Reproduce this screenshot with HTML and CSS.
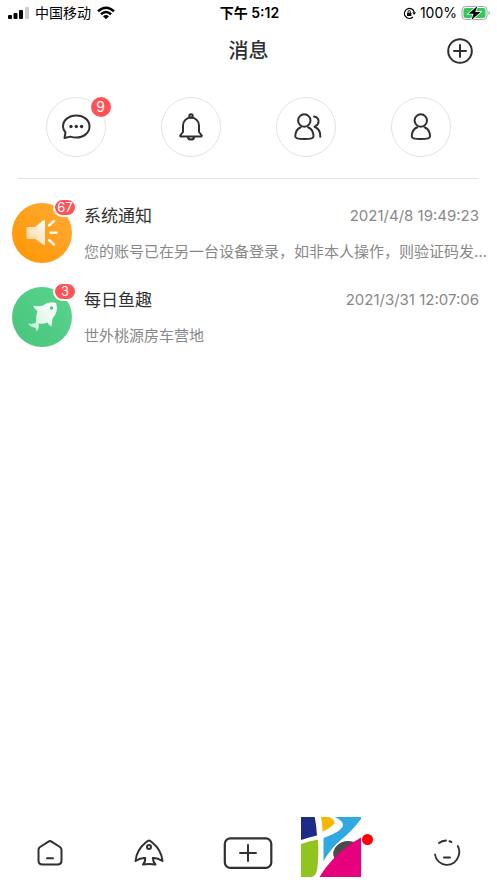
FILE: index.html
```html
<!DOCTYPE html>
<html lang="zh-CN">
<head>
<meta charset="utf-8">
<meta name="viewport" content="width=device-width, initial-scale=1">
<title>消息</title>
<link rel="stylesheet" href="styles.css">
</head>
<body>
<div class="status">
  <div class="status-side">
    <svg width="21" height="14" viewBox="0 0 21 14"><rect x="0" y="9" width="4" height="4" rx="1"/><rect x="5.500" y="7" width="4" height="6" rx="1"/><rect x="11" y="4" width="4" height="9" rx="1"/><rect x="17" y="1" width="4" height="12" rx="1" fill="#ccc"/></svg>
    <span>中国移动</span>
    <svg width="18" height="14" viewBox="0 0 18 14" fill="none" stroke="#000" stroke-width="2.500"><path d="M1 5.200Q9-1.800 17 5.200M3.900 8.200Q9 3.800 14.100 8.200"/><path d="M6 10.300Q9 7.900 12 10.300L9 13.300Z" fill="#000" stroke="none"/></svg>
  </div>
  <span class="clock">下午 5:12</span>
  <div class="status-side status-end">
    <svg width="13" height="13" viewBox="0 0 13 13" fill="none" stroke="#000" stroke-width="1.200"><path d="M10 10A5 5 0 1 1 11.200 5"/><path d="M9.300 5.300h3.700l-1.900 2.700z" fill="#000" stroke="none"/><rect x="4" y="5.800" width="4.400" height="3.200" rx=".5" fill="#000" stroke="none"/><path d="M5 5.800V4.800a1.200 1.200 0 0 1 2.400 0v1" stroke-width="1"/></svg>
    <span>100%</span>
    <svg width="30" height="16" viewBox="0 0 30 16"><rect x="1" y="1.500" width="25" height="13" rx="3.500" fill="#fff" stroke="#a5a5a5"/><rect x="2.500" y="3" width="22" height="10" rx="2.200" fill="#34c759"/><path d="M27.500 6v4q1.500-.5 1.500-2t-1.500-2" fill="#aaa"/><path d="M16.500 1 7.500 8.800h5L10.500 15l9-8h-5.300z" stroke="#fff" stroke-width="1.500" paint-order="stroke"/></svg>
  </div>
</div>

<header class="header">
  <h1>消息</h1>
  <button class="add" aria-label="添加"><svg width="26" height="26" viewBox="0 0 26 26" class="line"><circle cx="13" cy="13" r="11.800"/><path d="M13 7v12M7 13h12"/></svg></button>
</header>

<div class="shortcuts">
  <button class="circle" aria-label="聊天">
    <svg width="32" height="32" viewBox="0 0 32 32" class="line"><path d="M4.500 27 5.500 21.500C3.800 19.700 3 17.800 3 15.500 3 9.200 8.800 4.500 16.300 4.500S29.500 9.200 29.500 15.500 23.700 26.500 16.300 26.500C14 26.500 12.300 26.200 10.500 25.600Z"/><g fill="#303030" stroke="none"><circle cx="11" cy="15.500" r="1.700"/><circle cx="16.300" cy="15.500" r="1.700"/><circle cx="21.600" cy="15.500" r="1.700"/></g></svg>
    <span class="count">9</span>
  </button>
  <button class="circle" aria-label="提醒">
    <svg width="32" height="32" viewBox="0 0 32 32" class="line"><path d="M8 21V14.500a8 8 0 0 1 16 0V21L26.800 24.500Q27 25.600 25.500 25.600H6.500Q5 25.600 5.200 24.500ZM13 26.500Q13.300 28.500 16 28.500T19 26.500"/><circle cx="16" cy="5" r="1.700"/></svg>
  </button>
  <button class="circle" aria-label="好友">
    <svg width="32" height="32" viewBox="0 0 32 32" class="line"><circle cx="14.300" cy="9.500" r="6.200"/><path d="M10.800 16.200C7.300 17.600 5.300 21 5.300 25.500 5.300 27.400 8.500 28 14.300 28S23.500 27.400 23.500 25.500C23.500 21 21.500 17.600 18 16.200M24 5.400C27.200 6 28.800 8.200 28.500 11 28.300 13.300 27 14.800 24.500 15.700 28.500 17.300 30.500 20.600 30.300 25.700"/></svg>
  </button>
  <button class="circle" aria-label="我的">
    <svg width="32" height="32" viewBox="0 0 32 32" class="line"><circle cx="15.800" cy="9.500" r="6.200"/><path d="M12.300 16.200C8.800 17.600 6.800 21 6.800 25.500 6.800 27.400 10 28 15.800 28S25 27.400 25 25.500C25 21 23 17.600 19.500 16.200"/></svg>
  </button>
</div>

<main class="messages">
  <a class="row" href="#system">
    <span class="avatar">
      <svg width="60" height="60" viewBox="0 0 60 60"><defs><linearGradient id="orange" x1="1" y1="0" x2="0" y2="1"><stop stop-color="#ffac38"/><stop offset="1" stop-color="#ff9500"/></linearGradient><linearGradient id="horn" x1="0" y1="1" x2="1" y2="0"><stop stop-color="#ffd08a"/><stop offset="1" stop-color="#fff"/></linearGradient></defs><circle cx="30" cy="30" r="30" fill="url(#orange)"/><path d="M16 24h7l8-6.500Q33 16.300 33 18V41Q33 43 31 41.500L23 36H16Q14.500 36 14.500 34.500V25.500Q14.500 24 16 24" fill="url(#horn)"/><path d="M37 22.500 42 18M38.500 29.700h6M37 37 42 41.500" stroke="#fff6e6" stroke-width="2.500" stroke-linecap="round"/></svg>
      <span class="badge">67</span>
    </span>
    <span class="body">
      <span class="top"><strong>系统通知</strong><time>2021/4/8 19:49:23</time></span>
      <span class="text">您的账号已在另一台设备登录，如非本人操作，则验证码发…</span>
    </span>
  </a>
  <a class="row" href="#daily">
    <span class="avatar">
      <svg width="60" height="60" viewBox="0 0 60 60"><defs><linearGradient id="green" x1="1" y1="0" x2="0" y2="1"><stop stop-color="#5bd58e"/><stop offset="1" stop-color="#48c47c"/></linearGradient><linearGradient id="fish" x1="1" y1="0" x2="0" y2="1"><stop stop-color="#fff"/><stop offset=".6" stop-color="#e2f7eb"/><stop offset="1" stop-color="#b5e9ca"/></linearGradient></defs><circle cx="30" cy="30" r="30" fill="url(#green)"/><path d="M44 16Q37 13.500 31 18.500 26 20 21.500 18.500 21.500 21 25.500 24 23.500 29 24 35.500 19.500 38 16 36 18 40 22.500 40.500 25 41.500 24 45 28 41 26.500 36.500 32 37.500 35.500 35.500 37 38.500 39.500 39.500 40 35 40.500 31.500 47 24.500 44 16Z" fill="url(#fish)"/><circle cx="39.500" cy="21" r="1.700" fill="#50c982"/></svg>
      <span class="badge">3</span>
    </span>
    <span class="body">
      <span class="top"><strong>每日鱼趣</strong><time>2021/3/31 12:07:06</time></span>
      <span class="text">世外桃源房车营地</span>
    </span>
  </a>
</main>

<nav class="tabs">
  <a href="#home" aria-label="首页"><svg width="30" height="30" viewBox="0 0 30 30" class="line"><path d="M13.500 3.600Q15 2.600 16.500 3.600L25 9Q26.500 10 26.500 12V22.500Q26.500 26.500 22.500 26.500H7.500Q3.500 26.500 3.500 22.500V12Q3.500 10 5 9ZM12 20.300h6"/></svg></a>
  <a href="#fish" aria-label="鱼"><svg width="30" height="30" viewBox="0 0 30 30" class="line"><path d="M15 2.500Q16 2.500 18 4.300 27.500 12 28.500 23 23 19.500 18.800 20 19 24 21.500 26.500 15 25.500 9 26.500 11.500 24 11.200 20 7 19.500 1.500 23 2.500 12 12 4.300 14 2.500 15 2.500Z"/><circle cx="15" cy="9" r="2"/></svg></a>
  <a href="#new" aria-label="发布"><svg width="50" height="34" viewBox="0 0 50 34" class="line"><rect x="1.800" y="2.300" width="46.500" height="29.500" rx="5.500" stroke-width="2.200"/><path d="M25 9v16M17 17h16"/></svg></a>
  <a href="#messages" class="current" aria-label="消息">
    <svg width="60" height="60" viewBox="0 0 60 60"><path fill="#1b2b86" d="M0 0H13.700Q15.500 9 16 18.500 8 20 0 23Z"/><path fill="#f8b500" d="M20 0H28Q36 4 32.500 7.500 28 12 21.500 14.500 21.500 7 20 0Z"/><path fill="#30a8e1" d="M34 0H60V2Q51 14 41 22 30 31 22.500 44L22.500 21Q42 14 42 7.500 42 4 34 0Z"/><path fill="#90c51f" d="M0 27Q8 24 17 22.500 18 40 16 53 14.500 60 10 60H0Z"/><path fill="#4c4a4c" d="M33.500 42Q30 34 36 28.500 43 22 53 25L52 28Z"/><path fill="#e6007e" d="M60 20.500V60H18.500Q33 36 60 20.500Z"/></svg>
    <span class="dot"></span>
  </a>
  <a href="#me" aria-label="我的"><svg width="30" height="30" viewBox="0 0 30 30" class="line"><path d="M3 16.500A12 12 0 0 0 26.500 18M25.800 8Q28.500 13 26.500 18" stroke-width="1.800"/><path d="M7 5Q10 2.700 14 2.400M17.500 3.200l1.800.8M12 19.500h6"/></svg></a>
</nav>
</body>
</html>
```
FILE: styles.css
```css
* {
  box-sizing: border-box;
}

body {
  margin: 0;
  min-height: 100vh;
  display: flex;
  flex-direction: column;
  background: #fff;
  color: #303030;
  font-family: Inter, "Noto Sans CJK SC", sans-serif;
}

svg {
  display: block;
  flex: none;
}

button {
  padding: 0;
  background: none;
  border: 0;
  color: inherit;
  font: inherit;
}

a {
  color: inherit;
  text-decoration: none;
}

.line {
  fill: none;
  stroke: #303030;
  stroke-width: 2;
  stroke-linecap: round;
  stroke-linejoin: round;
}

.status {
  display: grid;
  grid-template-columns: 1fr auto 1fr;
  align-items: center;
  height: 26px;
  padding: 0 6px 0 8px;
  color: #000;
  font-size: 14px;
  line-height: 20px;
}

.status-side {
  display: flex;
  align-items: center;
  gap: 6px;
}

.status-end {
  justify-content: flex-end;
  gap: 4px;
}

.clock {
  font-weight: 600;
}

.header {
  display: grid;
  grid-template-columns: 1fr auto 1fr;
  align-items: center;
  height: 50px;
  padding: 0 24px;
}

.header h1 {
  grid-column: 2;
  margin: 0;
  font-size: 20px;
  font-weight: 500;
  line-height: 28px;
}

.add {
  justify-self: end;
}

.shortcuts {
  display: grid;
  grid-template-columns: repeat(4, 1fr);
  justify-items: center;
  margin: 0 18px;
  padding: 21px 0;
  border-bottom: 1px solid #e2e2e2;
}

.circle {
  position: relative;
  display: grid;
  place-items: center;
  width: 60px;
  height: 60px;
  border: 1px solid #e2e2e2;
  border-radius: 50%;
}

.count {
  position: absolute;
  top: -1px;
  right: -6px;
  width: 20px;
  border-radius: 10px;
  background: #ff5257;
  color: #fff;
  font-size: 14px;
  line-height: 20px;
  text-align: center;
}

.messages {
  flex: 1;
  padding-top: 12px;
}

.row {
  display: flex;
  align-items: center;
  gap: 12px;
  height: 84px;
  padding: 0 12px;
}

.avatar {
  position: relative;
}

.badge {
  position: absolute;
  top: -5px;
  right: -5px;
  min-width: 24px;
  border: 2px solid #fff;
  border-radius: 10px;
  background: #ff5257;
  color: #fff;
  font-size: 13px;
  line-height: 15px;
  text-align: center;
}

.body {
  flex: 1;
  min-width: 0;
  display: flex;
  flex-direction: column;
  gap: 12px;
  padding-top: 2px;
}

.top {
  display: flex;
  align-items: center;
  justify-content: space-between;
  padding-right: 6px;
  line-height: 24px;
}

.top strong {
  font-size: 17px;
  font-weight: 400;
}

.top time {
  color: #888;
  font-size: 15px;
}

.text {
  color: #888;
  font-size: 15px;
  line-height: 24px;
  white-space: nowrap;
}

.tabs {
  display: grid;
  grid-template-columns: repeat(5, 1fr);
  align-items: center;
  justify-items: center;
  height: 60px;
  margin-bottom: 6px;
}

.tabs a {
  margin-top: 12px;
}

.tabs .current {
  position: relative;
  justify-self: start;
  margin: 0 3px;
}

.dot {
  position: absolute;
  top: 17px;
  right: -12px;
  width: 11px;
  height: 11px;
  border-radius: 50%;
  background: #f00;
}
```
